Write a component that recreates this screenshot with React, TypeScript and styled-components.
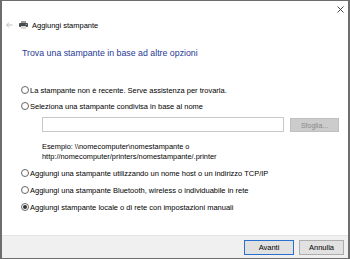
import React from "react";
import styled, { createGlobalStyle } from "styled-components";

const GlobalStyle = createGlobalStyle`
    html, body {
        margin: 0;
        padding: 0;
        background: #fff;
    }
    * {
        box-sizing: border-box;
    }
`;

const Window = styled.div`
    width: 350px;
    height: 259px;
    border: 1px solid #6d6d6d;
    border-left-width: 2px;
    border-right-width: 2px;
    display: flex;
    flex-direction: column;
    background: #fff;
    font-family: "Liberation Sans", Arial, sans-serif;
    color: #000;
    overflow: hidden;
`;

const TitleBar = styled.div`
    height: 17px;
    display: flex;
    justify-content: flex-end;
    align-items: center;
    padding-right: 4px;
`;

const NavRow = styled.div`
    height: 14px;
    display: flex;
    align-items: center;
    padding-left: 4px;
    gap: 6px;
`;

const NavTitle = styled.span`
    font-size: 7.5px;
    margin-left: -2px;
`;

const Content = styled.div`
    padding-left: 19px;
    display: flex;
    flex-direction: column;
`;

const Heading = styled.h1`
    margin: 15px 0 0 1px;
    font-size: 8.8px;
    line-height: 12px;
    font-weight: normal;
    color: #1f3a93;
`;

const Options = styled.div`
    margin-top: 25px;
    display: flex;
    flex-direction: column;
`;

const OptionRow = styled.label<{ $gap: number }>`
    display: flex;
    align-items: center;
    height: 12px;
    margin-top: ${(p) => p.$gap}px;
    font-size: 7.5px;
    color: #000;
    gap: 1px;
`;

const Radio = styled.span<{ $checked?: boolean }>`
    width: 8px;
    height: 8px;
    border-radius: 50%;
    border: 1px solid #666;
    display: flex;
    align-items: center;
    justify-content: center;
    flex-shrink: 0;

    &::after {
        content: "";
        width: 4px;
        height: 4px;
        border-radius: 50%;
        background: ${(p) => (p.$checked ? "#333" : "transparent")};
    }
`;

const InputRow = styled.div`
    margin: 5px 0 0 21px;
    display: flex;
    gap: 6px;
    height: 15px;
`;

const TextBox = styled.div`
    width: 242px;
    border: 1px solid #c8c8c8;
    background: #fff;
`;

const BrowseButton = styled.div`
    width: 49px;
    height: 14px;
    margin-top: 1px;
    border: 1px solid #bfbfbf;
    background: #cccccc;
    color: #8a8a8a;
    font-size: 7px;
    display: flex;
    align-items: center;
    justify-content: center;
`;

const Example = styled.div`
    margin: 10px 0 0 21px;
    font-size: 7.4px;
    line-height: 10px;
    color: #000;
`;

const Footer = styled.div`
    margin-top: auto;
    height: 23px;
    background: #f0f0f0;
    border-top: 1px solid #e3e3e3;
    display: flex;
    justify-content: flex-end;
    align-items: center;
    gap: 5px;
    padding-right: 4px;
`;

const DialogButton = styled.div<{ $primary?: boolean }>`
    width: ${(p) => (p.$primary ? 50 : 45)}px;
    height: 15px;
    border: 1px solid ${(p) => (p.$primary ? "#2a6fc9" : "#adadad")};
    background: #e1e1e1;
    font-size: 7.5px;
    display: flex;
    align-items: center;
    justify-content: center;
`;

const PrinterIcon = () => (
    <svg width="9" height="8" viewBox="0 0 9 8">
        <rect x="2" y="0" width="5" height="2" fill="#9a9a9a" />
        <rect x="0" y="2" width="9" height="4" rx="1" fill="#4a4a4a" />
        <rect x="2" y="5" width="5" height="3" fill="#d8d8d8" />
        <rect x="6.5" y="3" width="1.5" height="1" fill="#6aa0d8" />
    </svg>
);

const BackArrow = () => (
    <svg width="7" height="6" viewBox="0 0 7 6">
        <path d="M3 0.5 L0.7 3 L3 5.5 M0.7 3 H6.5" stroke="#b5b5b5" strokeWidth="0.9" fill="none" />
    </svg>
);

const CloseIcon = () => (
    <svg width="7" height="7" viewBox="0 0 7 7">
        <path d="M0.5 0.5 L6.5 6.5 M6.5 0.5 L0.5 6.5" stroke="#333" strokeWidth="0.9" />
    </svg>
);

export default function App() {
    return (
        <>
            <GlobalStyle />
            <Window>
                <TitleBar>
                    <CloseIcon />
                </TitleBar>
                <NavRow>
                    <BackArrow />
                    <PrinterIcon />
                    <NavTitle>Aggiungi stampante</NavTitle>
                </NavRow>
                <Content>
                    <Heading>Trova una stampante in base ad altre opzioni</Heading>
                    <Options>
                        <OptionRow $gap={0}>
                            <Radio />
                            La stampante non è recente. Serve assistenza per trovarla.
                        </OptionRow>
                        <OptionRow $gap={4}>
                            <Radio />
                            Seleziona una stampante condivisa in base al nome
                        </OptionRow>
                        <InputRow>
                            <TextBox />
                            <BrowseButton>Sfoglia...</BrowseButton>
                        </InputRow>
                        <Example>
                            Esempio: \\nomecomputer\nomestampante o
                            <br />
                            http://nomecomputer/printers/nomestampante/.printer
                        </Example>
                        <OptionRow $gap={5}>
                            <Radio />
                            Aggiungi una stampante utilizzando un nome host o un indirizzo TCP/IP
                        </OptionRow>
                        <OptionRow $gap={5}>
                            <Radio />
                            Aggiungi una stampante Bluetooth, wireless o individuabile in rete
                        </OptionRow>
                        <OptionRow $gap={5}>
                            <Radio $checked />
                            Aggiungi stampante locale o di rete con impostazioni manuali
                        </OptionRow>
                    </Options>
                </Content>
                <Footer>
                    <DialogButton $primary>Avanti</DialogButton>
                    <DialogButton>Annulla</DialogButton>
                </Footer>
            </Window>
        </>
    );
}
